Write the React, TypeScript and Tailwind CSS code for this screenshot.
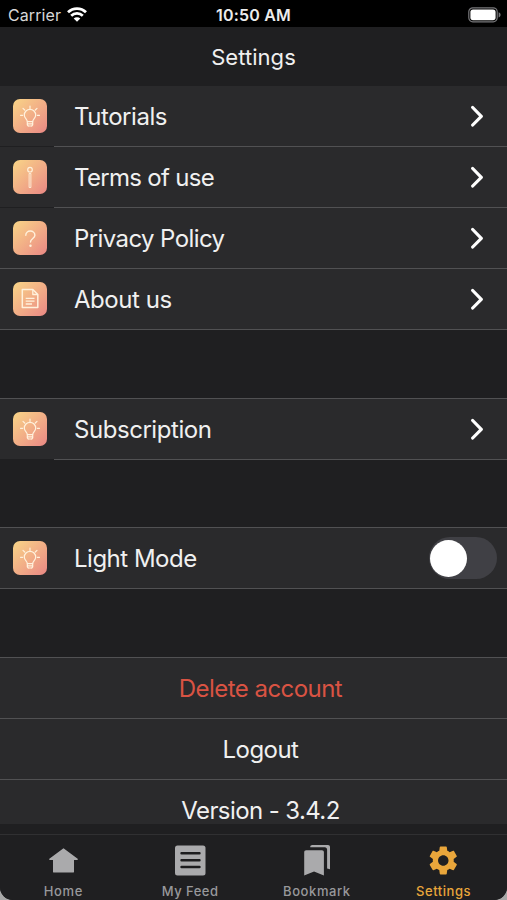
import type { ReactNode } from "react";

type RowProps = {
  icon: ReactNode;
  label: string;
  labelClass: string;
  insetLine?: boolean;
  children?: ReactNode;
};

const labelBase = "whitespace-nowrap text-[24px] leading-[30px] text-[#f0f0f0]";

function BulbIcon() {
  return (
    <svg viewBox="0 0 34 34" className="h-[34px] w-[34px]" fill="none" stroke="#fff1dc" strokeWidth="1.2" strokeLinecap="round" strokeLinejoin="round">
      <path d="M14.300 22.600c0-2.200-3-3.400-3-6.600a5.700 5.700 0 0 1 11.400 0c0 3.200-3 4.400-3 6.600z" />
      <path d="M14.300 24.900h5.400M15.300 27h3.400M14.300 22.600v3.200l1 1.200M19.700 22.600v3.200l-1 1.200" />
      <path d="M17 7v2.500M10 9.300l1.700 1.700M24 9.300l-1.700 1.700M7.500 16.300h2.200M24.300 16.300h2.200" />
    </svg>
  );
}

function InfoIcon() {
  return (
    <svg viewBox="0 0 34 34" className="h-[34px] w-[34px]" fill="none" stroke="#fff1dc" strokeWidth="1.200">
      <circle cx="17" cy="9.700" r="2.300" />
      <path d="M16.100 13.500h1.800v14h-1.800z" strokeWidth="0.900" />
    </svg>
  );
}

function QuestionIcon() {
  return (
    <svg viewBox="0 0 34 34" className="h-[34px] w-[34px]" fill="none" stroke="#fff1dc" strokeWidth="1.400" strokeLinecap="round">
      <path d="M12.800 14.300c0-2.500 2-4.300 4.500-4.300s4.600 1.700 4.600 4.200c0 3.300-4.400 3.300-4.400 6.900" />
      <circle cx="17.500" cy="24.700" r="1.200" fill="#fff1dc" stroke="none" />
    </svg>
  );
}

function DocumentIcon() {
  return (
    <svg viewBox="0 0 34 34" className="h-[34px] w-[34px]" fill="none" stroke="#fff1dc" strokeWidth="1.500" strokeLinejoin="round">
      <path d="M9.300 7.500h10.500l5 5v13H9.300z" />
      <path d="M19.800 7.500v5h5M12.700 16.400h8.800M12.700 19.200h8.800M12.700 22h6.300" strokeWidth="1.300" />
    </svg>
  );
}

function Chevron() {
  return (
    <svg viewBox="0 0 14 22" className="mr-[23px] h-[22px] w-[14px]" fill="none" stroke="#fff" strokeWidth="3.200" strokeLinecap="round" strokeLinejoin="round">
      <path d="M2.700 2.500L11.300 11.300L2.700 20" />
    </svg>
  );
}

function Row({ icon, label, labelClass, insetLine, children }: RowProps) {
  return (
    <div className="h-[61px] bg-[#2a2a2c]">
      <div className="flex h-[60px] items-center">
        <span className="ml-[13px] h-[34px] w-[34px] shrink-0 overflow-hidden rounded-[7px] bg-linear-to-br from-[#f8d587] to-[#e98784]">
          {icon}
        </span>
        <span className={`ml-[27px] flex-1 pt-[2px] ${labelBase} ${labelClass}`}>{label}</span>
        {children}
      </div>
      <div className="flex h-px">
        {insetLine && <div className="w-[54px] bg-[#1f1f21]" />}
        <div className="flex-1 bg-[#515153]" />
      </div>
    </div>
  );
}

function StatusBar() {
  return (
    <div className="grid h-[27px] grid-cols-3 items-center bg-black pt-[2px]">
      <div className="flex items-center pl-[8px]">
        <span className="text-[16px] leading-5 tracking-[0.1px] text-[#d8d8d8]">Carrier</span>
        <svg viewBox="0 0 20 15" className="ml-[6px] h-[15px] w-[20px]" fill="none" stroke="#fff" strokeWidth="2.700">
          <path d="M1 5.300a12.700 12.700 0 0 1 18 0M4.200 8.800a8.200 8.200 0 0 1 11.600 0" />
          <path d="M6.700 11.500a4.700 4.700 0 0 1 6.600 0L10 14.800z" fill="#fff" stroke="none" />
        </svg>
      </div>
      <span className="text-center text-[16px] font-semibold leading-5 tracking-[0.2px] text-[#ececec]">10:50 AM</span>
      <svg viewBox="0 0 33 16" className="mr-[6px] h-[16px] w-[33px] justify-self-end">
        <rect x="0.800" y="0.800" width="28.400" height="14" rx="4" fill="none" stroke="#77777a" strokeWidth="1.200" />
        <rect x="2.400" y="2.400" width="25.200" height="10.800" rx="2.600" fill="#fff" />
        <path d="M30.600 5.200c1.400.5 2 1.400 2 2.600s-.6 2.100-2 2.600z" fill="#77777a" />
      </svg>
    </div>
  );
}

function TabBar() {
  return (
    <nav className="grid h-[66px] grid-cols-4 border-t border-[#303032] bg-[#1f1f21] pt-[9px] text-center text-[13px] font-medium leading-4 text-[#98989b]">
      <div className="flex flex-col items-center gap-[7px]">
        <svg viewBox="0 0 32 32" className="h-[32px] w-[32px]" fill="#aaaaac">
          <path d="M16.500 4.300L31 15l-.6.900h-3.400V27.400c0 .8-.4 1.200-1.200 1.200H7.200c-.8 0-1.200-.4-1.200-1.200V15.900H2.600L2 15z" />
        </svg>
        <span className="tracking-[0.600px]">Home</span>
      </div>
      <div className="flex flex-col items-center gap-[7px]">
        <svg viewBox="0 0 32 32" className="h-[32px] w-[32px]">
          <rect x="1" y="1.500" width="30.500" height="30" rx="2.500" fill="#aaaaac" />
          <path d="M7.500 9.300h18M7.500 16.200h18M7.500 23h18" stroke="#1c1c1e" strokeWidth="2.400" strokeLinecap="round" />
        </svg>
        <span className="tracking-[0.450px]">My Feed</span>
      </div>
      <div className="flex flex-col items-center gap-[7px]">
        <svg viewBox="0 0 32 32" className="h-[32px] w-[32px]" fill="#aaaaac">
          <path d="M5.200 6.200h15.700c1.300 0 2 .7 2 2v23.400l-9.850-4-9.850 4V8.200c0-1.300.7-2 2-2z" />
          <path d="M9.200 3.300c0-1.600.7-2.400 2.200-2.400h15.600c1.200 0 2 .8 2 2V25.300l-2.900-.8V5.600c0-1.300-1-2.300-2.300-2.300z" />
        </svg>
        <span className="tracking-[0.600px]">Bookmark</span>
      </div>
      <div className="flex flex-col items-center gap-[7px] text-[#e9a63b]">
        <svg viewBox="1.500 0.700 22 22" className="h-[32px] w-[32px]" fill="currentColor">
          <path d="M19.140 12.940c.04-.3.06-.61.06-.94 0-.32-.02-.64-.07-.94l2.030-1.580c.18-.14.23-.41.12-.61l-1.920-3.320c-.12-.22-.37-.29-.59-.22l-2.390.96c-.5-.38-1.030-.7-1.620-.94l-.36-2.540c-.04-.24-.24-.41-.48-.41h-3.840c-.24 0-.43.17-.47.41l-.36 2.540c-.59.24-1.130.57-1.620.94l-2.390-.96c-.22-.08-.47 0-.59.22L2.740 8.870c-.12.21-.08.47.12.61l2.030 1.580c-.05.3-.09.63-.09.940s.02.640.070.940l-2.030 1.580c-.18.140-.23.410-.12.610l1.920 3.320c.12.220.37.290.59.220l2.390-.96c.5.380 1.030.7 1.620.940l.36 2.540c.05.240.24.410.48.410h3.840c.24 0 .44-.17.47-.41l.36-2.540c.59-.24 1.130-.56 1.620-.94l2.390.96c.22.080.47 0 .59-.22l1.920-3.320c.12-.22.070-.47-.12-.61l-2.010-1.580zM12 15.600c-1.980 0-3.600-1.620-3.600-3.600s1.620-3.600 3.600-3.600 3.600 1.620 3.600 3.600-1.620 3.600-3.600 3.600z" />
        </svg>
        <span className="tracking-[0.550px]">Settings</span>
      </div>
    </nav>
  );
}

export default function App() {
  return (
    <div className="h-[900px] w-[507px] overflow-hidden bg-[#a8a8a8] font-['Inter','Liberation_Sans',sans-serif]">
      <div className="flex h-[900px] flex-col overflow-hidden rounded-b-[13px] bg-[#1f1f21]">
        <StatusBar />
        <header className="flex h-[59px] items-center justify-center">
          <h1 className="text-[22px] leading-7 tracking-[0.050px] text-[#f0f0f0]">Settings</h1>
        </header>
        <main className="h-[738px] shrink-0 overflow-hidden">
          <Row icon={<BulbIcon />} label="Tutorials" labelClass="tracking-[-0.45px]" insetLine>
            <Chevron />
          </Row>
          <Row icon={<InfoIcon />} label="Terms of use" labelClass="tracking-[-0.7px]" insetLine>
            <Chevron />
          </Row>
          <Row icon={<QuestionIcon />} label="Privacy Policy" labelClass="tracking-[-0.6px]">
            <Chevron />
          </Row>
          <Row icon={<DocumentIcon />} label="About us" labelClass="tracking-[-0.45px]">
            <Chevron />
          </Row>
          <div className="mt-[68px] border-t border-[#515153]">
            <Row icon={<BulbIcon />} label="Subscription" labelClass="tracking-[-0.45px]" insetLine>
              <Chevron />
            </Row>
          </div>
          <div className="mt-[67px] border-t border-[#515153]">
            <Row icon={<BulbIcon />} label="Light Mode" labelClass="tracking-[-0.5px]">
              <span className="mr-[10px] flex h-[42px] w-[68px] items-center rounded-full bg-[#404045] pl-px">
                <span className="h-[37px] w-[37px] rounded-full bg-white" />
              </span>
            </Row>
          </div>
          <div className="mt-[68px] border-t border-[#515153] bg-[#2a2a2c] text-center">
            <div className={`flex h-[61px] items-center justify-center border-b border-[#515153] pt-[2px] pl-[14px] tracking-[-0.55px] ${labelBase}`}>
              <span className="text-[#d95343]">Delete account</span>
            </div>
            <div className={`flex h-[61px] items-center justify-center border-b border-[#515153] pt-[2px] pl-[14px] tracking-[-0.55px] ${labelBase}`}>
              Logout
            </div>
            <div className={`flex h-[60px] items-center justify-center pt-px pl-[14px] tracking-[-0.6px] ${labelBase}`}>Version - 3.4.2</div>
          </div>
        </main>
        <div className="h-[10px] shrink-0" />
        <TabBar />
      </div>
    </div>
  );
}
